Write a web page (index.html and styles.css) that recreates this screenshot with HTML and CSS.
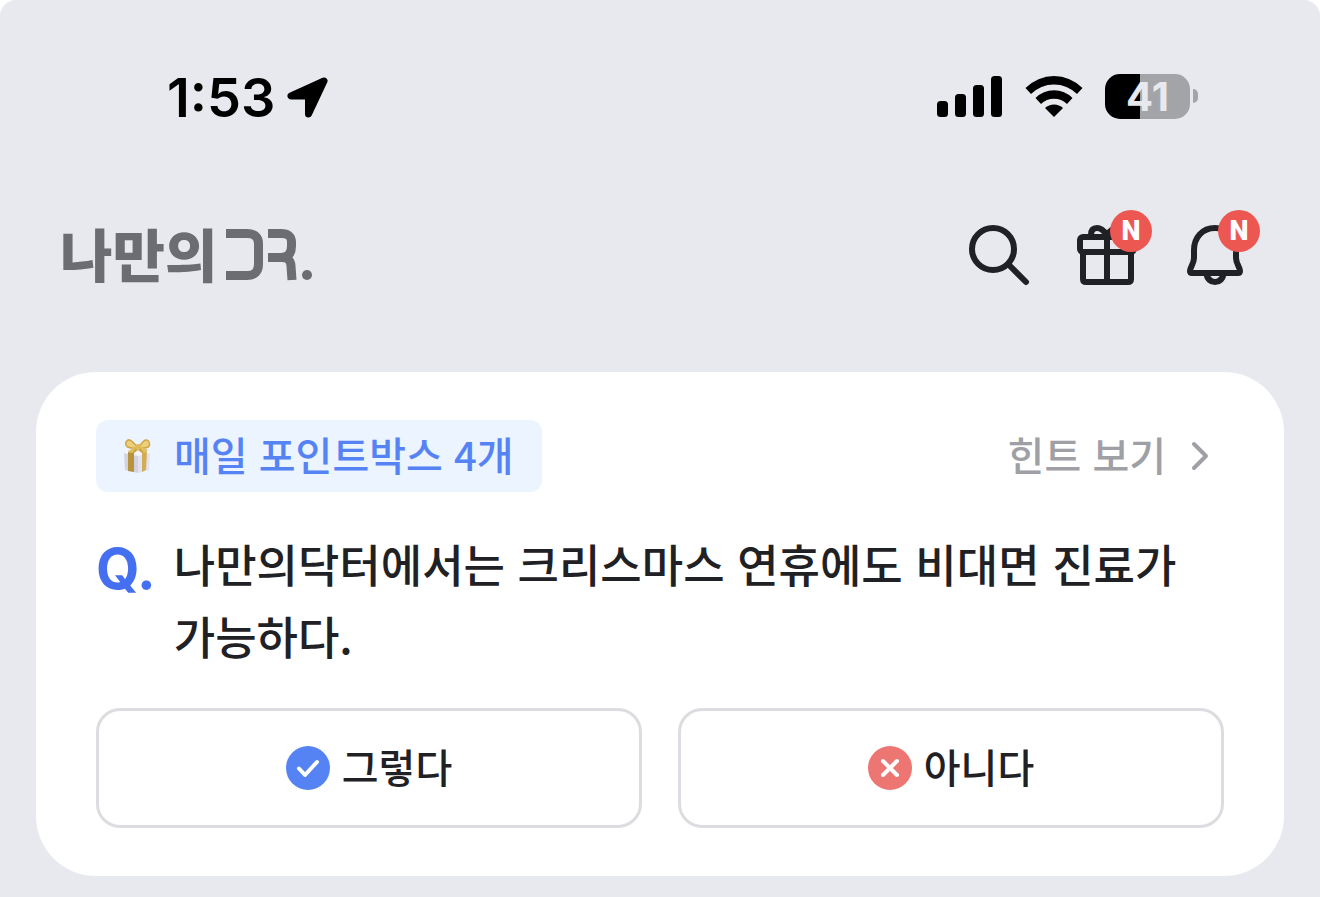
FILE: index.html
```html
<!DOCTYPE html>
<html lang="ko">
<head>
  <meta charset="UTF-8">
  <meta name="viewport" content="width=device-width, initial-scale=1.0">
  <title>나만의닥터</title>
  <link rel="stylesheet" href="styles.css">
</head>
<body>
  <div class="screen">
    <div class="status-bar">
      <div class="status-left">
        <span class="time">1:53</span>
        <svg class="location" width="42" height="42" viewBox="0 0 42 42">
          <path d="M37 4 L4 19 H21.500 V37 Z" fill="#000" stroke="#000" stroke-width="7" stroke-linejoin="round"/>
        </svg>
      </div>
      <div class="status-right">
        <svg width="66" height="42" viewBox="0 0 66 42">
          <rect x="0" y="25" width="11" height="16" rx="3.500"/>
          <rect x="18" y="18" width="11" height="23" rx="3.500"/>
          <rect x="36" y="9" width="11" height="32" rx="3.500"/>
          <rect x="54" y="0" width="11" height="41" rx="3.500"/>
        </svg>
        <svg width="58" height="42" viewBox="0 0 58 42">
          <path d="M0.500 12 A40 40 0 0 1 57.500 12 L52 18 A32.500 32.500 0 0 0 6 18 Z"/>
          <path d="M10.500 22 A26 26 0 0 1 47.500 22 L42 28 A18.500 18.500 0 0 0 16 28 Z"/>
          <path d="M20 32 A13 13 0 0 1 38 32 L29 41 Z"/>
        </svg>
        <div class="battery">
          <span class="battery-level">41</span>
          <span class="battery-cap"></span>
        </div>
      </div>
    </div>

    <header class="header">
      <a class="logo" href="#" aria-label="나만의닥터">
        <span class="logo-text">나만의</span>
        <svg width="90" height="56" viewBox="0 0 90 56">
          <g fill="none" stroke="#6b6d73" stroke-width="9">
            <path d="M3 7.500 H24 Q35.500 7.500 35.500 18 V38 Q35.500 49.500 24 49.500 H3"/>
            <path d="M45 7.500 H58 Q68.500 7.500 68.500 16 V20 Q68.500 31.500 58 31.500 H45 M58 31.500 Q67.500 31 68 40 L69 54"/>
          </g>
          <circle cx="84" cy="49" r="5" fill="#6b6d73"/>
        </svg>
      </a>
      <nav class="actions">
        <button class="icon-btn" aria-label="검색">
          <svg width="72" height="72" viewBox="0 0 72 72">
            <circle cx="29" cy="31" r="21"/>
            <path d="M45 47 L62 64"/>
          </svg>
        </button>
        <button class="icon-btn" aria-label="선물">
          <svg width="72" height="72" viewBox="0 0 72 72">
            <rect x="8" y="19" width="54" height="15" rx="3"/>
            <path d="M11 34 V61 Q11 64 14 64 H56 Q59 64 59 61 V34 M35 19 V64"/>
            <path d="M19 17 Q19 10 25 10 Q30 10 35 17 Q40 10 45 10 Q51 10 51 17"/>
          </svg>
          <span class="badge">N</span>
        </button>
        <button class="icon-btn" aria-label="알림">
          <svg width="72" height="72" viewBox="0 0 72 72">
            <path d="M35 10 C22 10 14 20 14 32 V40 C14 46 10 49 10 53 Q10 55 12 55 H58 Q60 55 60 53 C60 49 56 46 56 40 V32 C56 20 48 10 35 10 Z"/>
            <path d="M26 55 Q28 64 35 64 Q42 64 44 55"/>
          </svg>
          <span class="badge">N</span>
        </button>
      </nav>
    </header>

    <main class="card">
      <div class="card-top">
        <div class="chip">
          <svg width="30" height="36" viewBox="0 0 30 36">
            <path d="M2 15 L16 17 V35 L3 32 Z" fill="#d3d2e0"/>
            <path d="M16 17 L28 14 L27 32 L16 35 Z" fill="#e3e2ee"/>
            <path d="M2 13 L15 10 L28 13 V15 L16 18 L2 15 Z" fill="#f5f4fa"/>
            <path d="M6 14 L12 15 V34 L6 33 Z" fill="#b8933c"/>
            <path d="M20 15 L25 14 L24 32 L20 34 Z" fill="#d1ae55"/>
            <path d="M15 8 L6 14 L12 15 L16 12 L20 15 L25 14 L18 8 Z" fill="#c9a242"/>
            <path d="M15 9 Q7 -2 4 4 Q2 11 15 10 Z M17 9 Q24 -2 27 4 Q30 11 17 10 Z" fill="#ecd07a" stroke="#cfa748" stroke-width="1.500"/>
            <path d="M14 9 L6 13 Q9 15 11 14 Z M18 9 L26 12 Q24 15 21 14 Z" fill="#e2bf60"/>
            <circle cx="16" cy="9" r="3" fill="#e0ba58"/>
          </svg>
          <span class="label">매일 포인트박스 4개</span>
        </div>
        <a class="hint" href="#">
          <span class="label">힌트 보기</span>
          <svg width="20" height="32" viewBox="0 0 20 32">
            <path d="M4 4 L16 16 L4 28" fill="none" stroke="#9fa0a6" stroke-width="4" stroke-linecap="round" stroke-linejoin="round"/>
          </svg>
        </a>
      </div>

      <div class="question">
        <span class="question-mark">Q.</span>
        <p class="question-text">나만의닥터에서는 크리스마스 연휴에도 비대면 진료가 가능하다.</p>
      </div>

      <div class="answers">
        <button class="answer">
          <svg width="44" height="44" viewBox="0 0 44 44">
            <circle cx="22" cy="22" r="22" fill="#5683f4"/>
            <path d="M13 22.500 L19 29 L31 16" fill="none" stroke="#fff" stroke-width="4" stroke-linecap="round" stroke-linejoin="round"/>
          </svg>
          <span class="label">그렇다</span>
        </button>
        <button class="answer">
          <svg width="44" height="44" viewBox="0 0 44 44">
            <circle cx="22" cy="22" r="22" fill="#ed7672"/>
            <path d="M15 15 L29 29 M29 15 L15 29" fill="none" stroke="#fff" stroke-width="4" stroke-linecap="round"/>
          </svg>
          <span class="label">아니다</span>
        </button>
      </div>
    </main>
  </div>
</body>
</html>
```
FILE: styles.css
```css
:root {
  --bg: #e8e9ee;
  --ink: #1f2124;
  --gray: #9fa0a6;
  --blue: #5683f4;
  --red: #ec5751;
}

* {
  box-sizing: border-box;
}

body {
  margin: 0;
  background: #fff;
  color: var(--ink);
  font-family: "Noto Sans CJK KR", sans-serif;
  font-weight: 500;
}

svg {
  display: block;
  flex-shrink: 0;
}

a {
  color: inherit;
  text-decoration: none;
}

button {
  padding: 0;
  background: none;
  color: inherit;
  font: inherit;
  cursor: pointer;
}

.screen {
  min-height: 100vh;
  padding: 68px 36px 20px;
  border-radius: 16px 16px 0 0;
  background: var(--bg);
}

/* status bar */
.status-bar {
  display: flex;
  justify-content: space-between;
  align-items: center;
  height: 58px;
  padding: 0 86px 0 131px;
  color: #000;
  font-family: Inter, sans-serif;
}

.status-left {
  display: flex;
  align-items: center;
  gap: 12px;
  padding-top: 2px;
}

.time {
  font-size: 54px;
  font-weight: 600;
  line-height: 58px;
}

.status-right {
  display: flex;
  align-items: center;
  gap: 22px;
}

.battery {
  display: flex;
  align-items: center;
  gap: 3px;
  padding-bottom: 2px;
}

.battery-level {
  width: 85px;
  height: 45px;
  border-radius: 15px;
  background: linear-gradient(to right, #000 41%, #a3a4a7 41%);
  color: var(--bg);
  font-size: 40px;
  font-weight: 700;
  line-height: 45px;
  text-align: center;
}

.battery-cap {
  width: 5px;
  height: 14px;
  border-radius: 0 5px 5px 0;
  background: #a3a4a7;
}

/* header */
.header {
  display: flex;
  justify-content: space-between;
  align-items: center;
  height: 246px;
  padding: 10px 32px 0 24px;
}

.logo {
  display: flex;
  align-items: center;
  gap: 6px;
}

.logo-text {
  padding-bottom: 4px;
  color: #6b6d73;
  font-size: 57px;
  font-weight: 900;
  line-height: 60px;
}

.actions {
  display: flex;
  gap: 36px;
}

.icon-btn {
  position: relative;
  border: none;
}

.icon-btn svg {
  fill: none;
  stroke: var(--ink);
  stroke-width: 6;
  stroke-linecap: round;
  stroke-linejoin: round;
}

.badge {
  position: absolute;
  top: -8px;
  right: -8px;
  width: 42px;
  height: 42px;
  border-radius: 50%;
  background: var(--red);
  color: #fff;
  font-family: Roboto, sans-serif;
  font-size: 27px;
  font-weight: 900;
  line-height: 42px;
  text-align: center;
}

/* quiz card */
.card {
  padding: 48px 60px;
  border-radius: 60px;
  background: #fff;
}

.card-top {
  display: flex;
  justify-content: space-between;
  align-items: center;
}

.label {
  padding-bottom: 4px;
}

.chip {
  display: flex;
  align-items: center;
  gap: 22px;
  height: 72px;
  padding: 0 28px 0 26px;
  border-radius: 12px;
  background: #ebf4ff;
  color: var(--blue);
  font-size: 40px;
  line-height: 68px;
}

.hint {
  display: flex;
  align-items: center;
  gap: 24px;
  padding-right: 14px;
  color: var(--gray);
  font-size: 40px;
  line-height: 68px;
}

.question {
  display: flex;
  gap: 18px;
  margin-top: 36px;
}

.question-mark {
  color: #456ff1;
  font-family: Inter, sans-serif;
  font-size: 56px;
  font-weight: 700;
  line-height: 82px;
}

.question-text {
  flex: 1;
  margin: 0;
  font-size: 45px;
  line-height: 72px;
}

.answers {
  display: flex;
  gap: 36px;
  margin-top: 36px;
}

.answer {
  display: flex;
  flex: 1;
  justify-content: center;
  align-items: center;
  gap: 12px;
  height: 120px;
  border: 3px solid #dcdde0;
  border-radius: 24px;
  font-size: 40px;
}
```
